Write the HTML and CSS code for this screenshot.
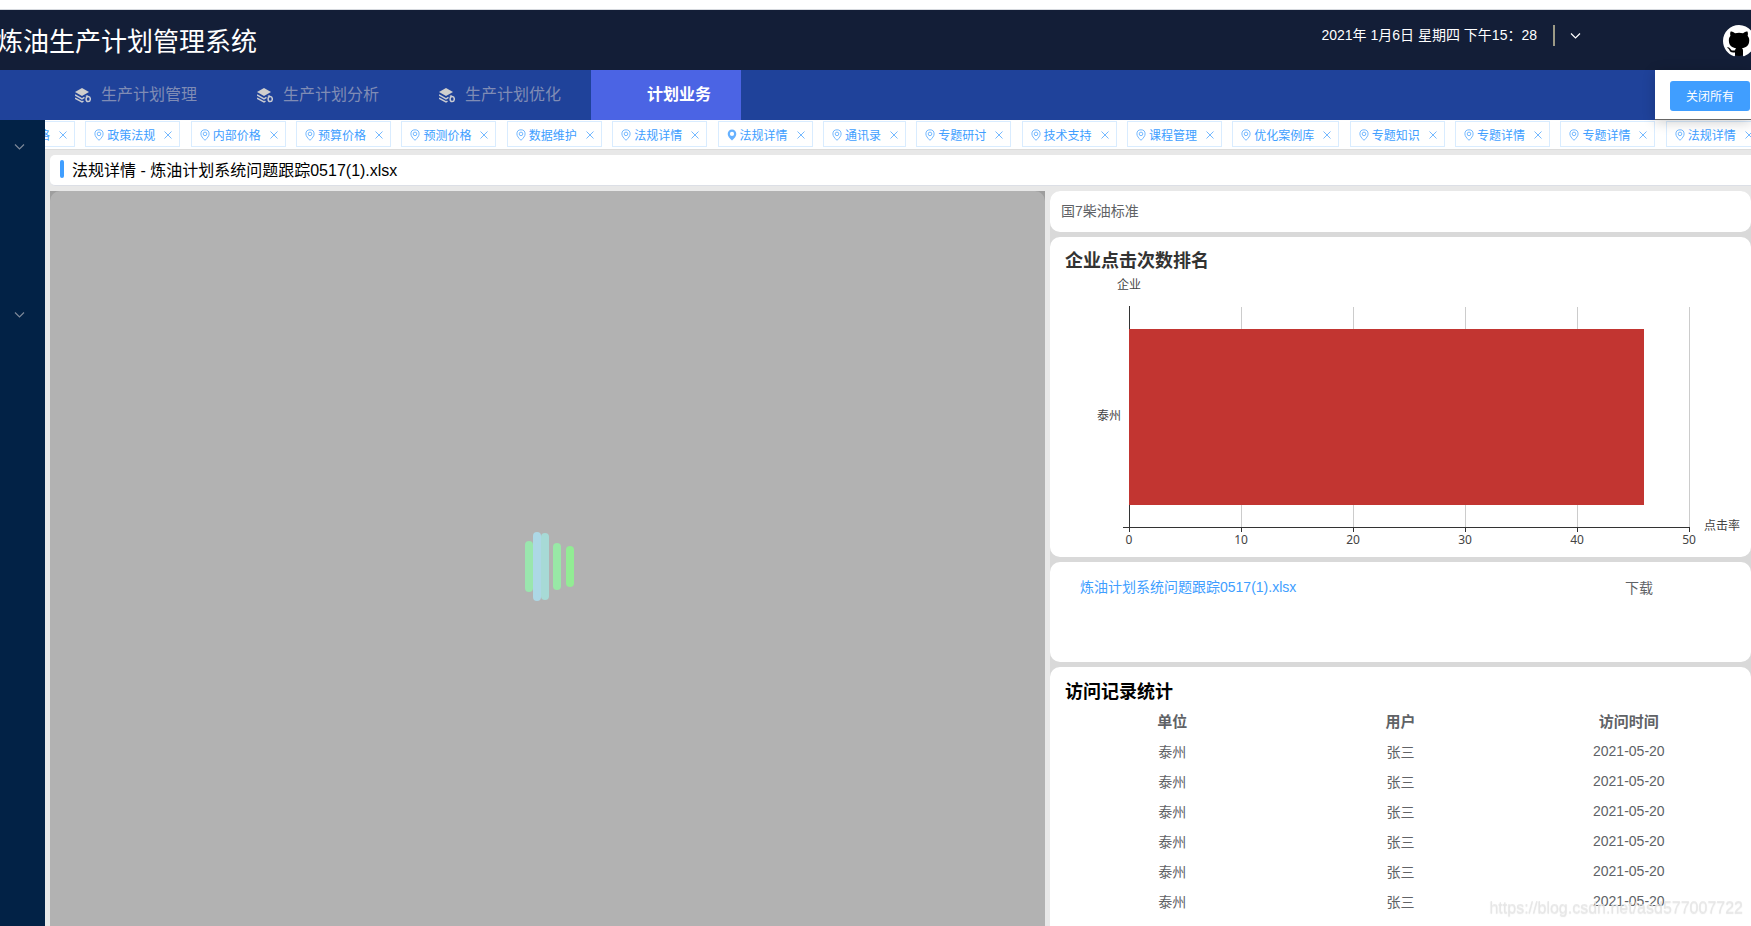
FILE: index.html
```html
<!DOCTYPE html>
<html lang="zh-CN">
<head>
<meta charset="utf-8">
<title>炼油生产计划管理系统</title>
<link rel="stylesheet" href="styles.css">
</head>
<body>
<svg class="defs" aria-hidden="true">
  <symbol id="layers" viewBox="0 0 16 16">
    <path d="M7 1 L14 5 L7 9 L0 5Z" fill="#d0cfcd"/>
    <path d="M0 8 L7 11.8 L9.5 10.4 M0 11.2 L7 15 L8.5 14.2" fill="none" stroke="#c9cbd2" stroke-width="1.5"/>
    <ellipse cx="13.2" cy="12" rx="2.1" ry="2.6" fill="none" stroke="#c9cbd2" stroke-width="1.5"/>
    <path d="M10.8 9 L13 9" fill="none" stroke="#c9cbd2" stroke-width="1.2"/>
  </symbol>
  <symbol id="pin" viewBox="0 0 12 12">
    <path d="M6 11.3 C3.6 9 1.9 7 1.9 4.9 A4.1 4.1 0 0 1 10.1 4.9 C10.1 7 8.4 9 6 11.3Z" fill="none" stroke="currentColor" stroke-width=".9"/>
    <circle cx="6" cy="4.9" r="1.8" fill="none" stroke="currentColor" stroke-width=".9"/>
  </symbol>
  <symbol id="pin-solid" viewBox="0 0 12 12">
    <path fill-rule="evenodd" d="M6 11.5 C3.4 9 1.7 7 1.7 4.9 A4.3 4.3 0 0 1 10.3 4.9 C10.3 7 8.6 9 6 11.5Z M6 2.8 A2.1 2.1 0 1 0 6 7 A2.1 2.1 0 1 0 6 2.8Z" fill="currentColor"/>
  </symbol>
  <symbol id="cross" viewBox="0 0 8 8">
    <path d="M.5 .5 L7.5 7.5 M7.5 .5 L.5 7.5" stroke="currentColor" stroke-width=".9" fill="none"/>
  </symbol>
  <symbol id="chevron" viewBox="0 0 10 6">
    <path d="M.5 .5 L5 5 L9.5 .5" stroke="currentColor" stroke-width="1.2" fill="none"/>
  </symbol>
</svg>

<header class="header">
  <h1 class="brand">炼油生产计划管理系统</h1>
  <div class="header-info">
    <time class="clock">2021年 1月6日 星期四 下午15：28</time>
    <span class="divider"></span>
    <button class="icon-button" aria-label="展开"><svg class="chevron"><use href="#chevron"/></svg></button>
  </div>
  <svg class="avatar" viewBox="0 0 16 16" aria-hidden="true">
    <circle cx="8" cy="8" r="7.5" fill="#000"/>
    <path fill="#fff" d="M8 0C3.58 0 0 3.58 0 8c0 3.54 2.29 6.53 5.47 7.59.4.07.55-.17.55-.38 0-.19-.01-.82-.01-1.49-2.01.37-2.53-.49-2.69-.94-.09-.23-.48-.94-.82-1.13-.28-.15-.68-.52-.01-.53.63-.01 1.08.58 1.23.82.72 1.21 1.87.87 2.33.66.07-.52.28-.87.51-1.07-1.78-.2-3.64-.89-3.64-3.95 0-.87.31-1.59.82-2.15-.08-.2-.36-1.02.08-2.12 0 0 .67-.21 2.2.82.64-.18 1.32-.27 2-.27s1.36.09 2 .27c1.53-1.04 2.2-.82 2.2-.82.44 1.1.16 1.92.08 2.12.51.56.82 1.27.82 2.15 0 3.07-1.87 3.75-3.65 3.95.29.25.54.73.54 1.48 0 1.07-.01 1.93-.01 2.2 0 .21.15.46.55.38A8.01 8.01 0 0 0 16 8c0-4.42-3.58-8-8-8z"/>
  </svg>
</header>

<nav class="nav">
  <a class="nav-item" href="#"><svg class="nav-icon"><use href="#layers"/></svg><span class="nav-label">生产计划管理</span></a>
  <a class="nav-item" href="#"><svg class="nav-icon"><use href="#layers"/></svg><span class="nav-label">生产计划分析</span></a>
  <a class="nav-item" href="#"><svg class="nav-icon"><use href="#layers"/></svg><span class="nav-label">生产计划优化</span></a>
  <a class="nav-item nav-item-active" href="#"><svg class="nav-icon"></svg><span class="nav-label">计划业务</span></a>
  <div class="popover"><button class="close-all">关闭所有</button></div>
</nav>

<div class="shell">
  <aside class="sidebar">
    <button class="icon-button" aria-label="展开菜单"><svg class="chevron"><use href="#chevron"/></svg></button>
    <button class="icon-button" aria-label="展开菜单"><svg class="chevron"><use href="#chevron"/></svg></button>
  </aside>
  <div class="content">
    <div class="tabs">
      <span class="tab"><svg class="pin"><use href="#pin"/></svg>价格<button class="tab-close" aria-label="关闭"><svg class="cross"><use href="#cross"/></svg></button></span>
      <span class="tab"><svg class="pin"><use href="#pin"/></svg>政策法规<button class="tab-close" aria-label="关闭"><svg class="cross"><use href="#cross"/></svg></button></span>
      <span class="tab"><svg class="pin"><use href="#pin"/></svg>内部价格<button class="tab-close" aria-label="关闭"><svg class="cross"><use href="#cross"/></svg></button></span>
      <span class="tab"><svg class="pin"><use href="#pin"/></svg>预算价格<button class="tab-close" aria-label="关闭"><svg class="cross"><use href="#cross"/></svg></button></span>
      <span class="tab"><svg class="pin"><use href="#pin"/></svg>预测价格<button class="tab-close" aria-label="关闭"><svg class="cross"><use href="#cross"/></svg></button></span>
      <span class="tab"><svg class="pin"><use href="#pin"/></svg>数据维护<button class="tab-close" aria-label="关闭"><svg class="cross"><use href="#cross"/></svg></button></span>
      <span class="tab"><svg class="pin"><use href="#pin"/></svg>法规详情<button class="tab-close" aria-label="关闭"><svg class="cross"><use href="#cross"/></svg></button></span>
      <span class="tab"><svg class="pin"><use href="#pin-solid"/></svg>法规详情<button class="tab-close" aria-label="关闭"><svg class="cross"><use href="#cross"/></svg></button></span>
      <span class="tab"><svg class="pin"><use href="#pin"/></svg>通讯录<button class="tab-close" aria-label="关闭"><svg class="cross"><use href="#cross"/></svg></button></span>
      <span class="tab"><svg class="pin"><use href="#pin"/></svg>专题研讨<button class="tab-close" aria-label="关闭"><svg class="cross"><use href="#cross"/></svg></button></span>
      <span class="tab"><svg class="pin"><use href="#pin"/></svg>技术支持<button class="tab-close" aria-label="关闭"><svg class="cross"><use href="#cross"/></svg></button></span>
      <span class="tab"><svg class="pin"><use href="#pin"/></svg>课程管理<button class="tab-close" aria-label="关闭"><svg class="cross"><use href="#cross"/></svg></button></span>
      <span class="tab"><svg class="pin"><use href="#pin"/></svg>优化案例库<button class="tab-close" aria-label="关闭"><svg class="cross"><use href="#cross"/></svg></button></span>
      <span class="tab"><svg class="pin"><use href="#pin"/></svg>专题知识<button class="tab-close" aria-label="关闭"><svg class="cross"><use href="#cross"/></svg></button></span>
      <span class="tab"><svg class="pin"><use href="#pin"/></svg>专题详情<button class="tab-close" aria-label="关闭"><svg class="cross"><use href="#cross"/></svg></button></span>
      <span class="tab"><svg class="pin"><use href="#pin"/></svg>专题详情<button class="tab-close" aria-label="关闭"><svg class="cross"><use href="#cross"/></svg></button></span>
      <span class="tab"><svg class="pin"><use href="#pin"/></svg>法规详情<button class="tab-close" aria-label="关闭"><svg class="cross"><use href="#cross"/></svg></button></span>
    </div>

    <h2 class="page-title">法规详情 - 炼油计划系统问题跟踪0517(1).xlsx</h2>

    <main class="columns">
      <section class="preview">
        <div class="preview-mask">
          <svg class="loader" viewBox="0 0 50 70" aria-label="加载中">
            <rect x="0" y="9" width="8" height="51" rx="4" fill="#9ae6ae"/>
            <rect x="8" y="0" width="8" height="69" rx="4" fill="#add8e6"/>
            <rect x="16" y="1" width="8" height="67" rx="4" fill="#a7dad6"/>
            <rect x="28" y="11" width="8" height="47" rx="4" fill="#98e8a6"/>
            <rect x="41" y="14" width="8" height="41" rx="4" fill="#92ec94"/>
          </svg>
        </div>
      </section>

      <div class="side">
        <section class="card note">国7柴油标准</section>

        <section class="card chart-card">
          <h3 class="chart-title">企业点击次数排名</h3>
          <svg class="chart" role="img" aria-label="企业点击次数排名">
            <g class="grid-lines">
              <line x1="20%" x2="20%" y1="34" y2="254"/>
              <line x1="40%" x2="40%" y1="34" y2="254"/>
              <line x1="60%" x2="60%" y1="34" y2="254"/>
              <line x1="80%" x2="80%" y1="34" y2="254"/>
              <line x1="100%" x2="100%" y1="34" y2="254"/>
            </g>
            <g class="axis">
              <line x1="0" x2="0" y1="33" y2="259"/>
              <line x1="-6" x2="100%" y1="254" y2="254"/>
              <line x1="20%" x2="20%" y1="254" y2="259"/>
              <line x1="40%" x2="40%" y1="254" y2="259"/>
              <line x1="60%" x2="60%" y1="254" y2="259"/>
              <line x1="80%" x2="80%" y1="254" y2="259"/>
              <line x1="100%" x2="100%" y1="254" y2="259"/>
            </g>
            <rect x="0" y="56" width="92%" height="176" fill="#c23531"/>
            <g class="labels">
              <text x="0" y="16">企业</text>
              <text x="-20" y="147">泰州</text>
              <text x="0" y="271">0</text>
              <text x="20%" y="271">10</text>
              <text x="40%" y="271">20</text>
              <text x="60%" y="271">30</text>
              <text x="80%" y="271">40</text>
              <text x="100%" y="271">50</text>
              <text x="100%" y="257" dx="33">点击率</text>
            </g>
          </svg>
        </section>

        <section class="card file-card">
          <a class="file-link" href="#">炼油计划系统问题跟踪0517(1).xlsx</a>
          <button class="download">下载</button>
        </section>

        <section class="card visits">
          <h3 class="visits-title">访问记录统计</h3>
          <table class="visits-table">
            <thead><tr><th>单位</th><th>用户</th><th>访问时间</th></tr></thead>
            <tbody>
              <tr><td>泰州</td><td>张三</td><td>2021-05-20</td></tr>
              <tr><td>泰州</td><td>张三</td><td>2021-05-20</td></tr>
              <tr><td>泰州</td><td>张三</td><td>2021-05-20</td></tr>
              <tr><td>泰州</td><td>张三</td><td>2021-05-20</td></tr>
              <tr><td>泰州</td><td>张三</td><td>2021-05-20</td></tr>
              <tr><td>泰州</td><td>张三</td><td>2021-05-20</td></tr>
            </tbody>
          </table>
        </section>
      </div>
    </main>
  </div>
</div>
<div class="watermark">https://blog.csdn.net/asd577007722</div>
</body>
</html>
```
FILE: styles.css
```css
* { box-sizing: border-box; }

body {
  margin: 0;
  padding-top: 9px;
  height: 100vh;
  display: flex;
  flex-direction: column;
  overflow: hidden;
  background: #fff;
  color: #606266;
  font-family: "Liberation Sans", "Noto Sans CJK SC", sans-serif;
  font-size: 14px;
}

h1, h2, h3 { margin: 0; }
button { border: 0; padding: 0; background: none; font: inherit; color: inherit; }
a { text-decoration: none; }
.defs { position: absolute; width: 0; height: 0; }

.header {
  flex: none;
  height: 61px;
  border-top: 1px solid #d6d9de;
  background: #131e37;
  color: #fff;
  display: flex;
  align-items: flex-start;
  overflow: hidden;
}
.brand {
  margin-left: -3px;
  padding-top: 2px;
  flex: 1;
  font-size: 26px;
  font-weight: 400;
  line-height: 60px;
}
.header-info {
  display: flex;
  align-items: center;
  height: 21px;
  margin-top: 15px;
  margin-right: 142px;
}
.clock { line-height: 20px; padding-bottom: 2px; }
.divider { width: 2px; height: 21px; margin: 0 15px 0 16px; background: #9c9a86; }
.icon-button { display: flex; }
.chevron { width: 11px; height: 6px; }
.avatar { flex: none; width: 32px; height: 32px; margin: 15px -4px 0 0; }

.nav {
  flex: none;
  position: relative;
  display: flex;
  height: 50px;
  padding-left: 45px;
  background: #1f429a;
}
.nav-item {
  display: flex;
  align-items: center;
  padding: 0 30px;
  font-size: 16px;
  color: #7f8cb5;
}
.nav-label { padding-bottom: 4px; }
.nav-icon { width: 16px; height: 16px; margin-right: 10px; }
.nav-item-active { background: #4b64e4; color: #fff; font-weight: 700; }
.popover {
  position: absolute;
  right: 0;
  top: 0;
  z-index: 2;
  padding: 11px 1px 8px 15px;
  background: #fff;
  border-bottom: 1px solid #666;
  box-shadow: 0 2px 12px rgba(0, 0, 0, .2);
}
.close-all {
  display: block;
  width: 80px;
  height: 30px;
  padding-bottom: 2px;
  border-radius: 3px;
  background: #409eff;
  color: #fff;
  font-size: 12px;
}

.shell { flex: 1; min-height: 0; display: flex; }
.sidebar {
  flex: none;
  width: 45px;
  padding: 24px 14px;
  display: flex;
  flex-direction: column;
  gap: 162px;
  background: #022246;
  color: #7d8899;
}
.content {
  flex: 1;
  min-width: 0;
  display: flex;
  flex-direction: column;
  background: #e8e8e8;
}

.tabs {
  flex: none;
  height: 30px;
  padding-top: 1px;
  overflow: hidden;
  white-space: nowrap;
  background: #fff;
  border-bottom: 1px solid #dcdcdc;
  font-size: 12px;
}
.tab {
  display: inline-flex;
  align-items: center;
  height: 26px;
  margin-right: 7px;
  padding: 1px 7px 0;
  border: 1px solid #d9ecff;
  background: #fff;
  color: #409eff;
}
.tab:first-child { margin-left: -41px; }
.pin { width: 12px; height: 12px; margin: 1px 2px 0 0; opacity: .8; }
.tab-close { display: flex; margin: 1px 0 0 9px; opacity: .8; }
.cross { width: 8px; height: 8px; }

.page-title {
  flex: none;
  display: flex;
  align-items: center;
  gap: 8px;
  height: 31px;
  margin: 5px 0 5px 5px;
  padding: 0 0 2px 10px;
  border-radius: 5px 0 0 5px;
  border-bottom: 1px solid #dcdfe6;
  background: #fff;
  color: #000;
  font-size: 16px;
  font-weight: 400;
}
.page-title::before {
  content: "";
  width: 4px;
  height: 18px;
  border-radius: 2px;
  background: #409eff;
}

.columns {
  flex: 1;
  min-height: 0;
  display: grid;
  grid-template-columns: 995fr 701fr;
  gap: 5px;
  padding-left: 5px;
}
.preview { background: #9e9e9e; }
.preview-mask {
  height: 100%;
  padding: 16px 0 0 4px;
  display: flex;
  align-items: center;
  justify-content: center;
  border-radius: 10px 10px 0 0;
  background: #b2b2b2;
}
.loader { width: 50px; height: 70px; }

.side { display: flex; flex-direction: column; gap: 5px; min-width: 0; background: #d9d9d9; border-radius: 10px 10px 0 0; }
.card {
  flex: none;
  border-radius: 10px;
  background: #fff;
}
.note { padding: 10px 11px 11px; line-height: 20px; }
.chart-card { padding: 12px 62px 8px 79px; }
.chart-title {
  margin-left: -64px;
  color: #333;
  font-size: 18px;
  line-height: 24px;
}
.chart { display: block; width: 100%; height: 276px; overflow: visible; shape-rendering: crispEdges; }
.grid-lines { stroke: #ccc; }
.axis { stroke: #333; }
.labels {
  fill: #444;
  font-family: "Noto Sans", "Noto Sans CJK SC", sans-serif;
  font-size: 12px;
  text-anchor: middle;
}
.file-card {
  display: flex;
  justify-content: space-between;
  align-items: flex-start;
  min-height: 100px;
  padding: 15px 98px 15px 30px;
  line-height: 20px;
}
.file-link { color: #409eff; }
.download { line-height: 22px; }
.visits { flex: 1; padding: 13px 8px 0; border-radius: 10px 10px 0 0; }
.visits-title { padding-left: 7px; color: #000; font-size: 18px; line-height: 24px; }
.visits-table {
  width: 100%;
  table-layout: fixed;
  border-collapse: collapse;
  text-align: center;
}
.visits-table th { height: 32px; padding: 0; font-size: 15px; }
.visits-table td { height: 30px; padding: 0; }

.watermark {
  position: fixed;
  right: 8px;
  bottom: 8px;
  z-index: 3;
  color: rgba(230, 230, 230, .8);
  font-size: 16px;
  line-height: 20px;
  text-shadow: 0 1px 1px rgba(170, 170, 170, .3);
}
```
